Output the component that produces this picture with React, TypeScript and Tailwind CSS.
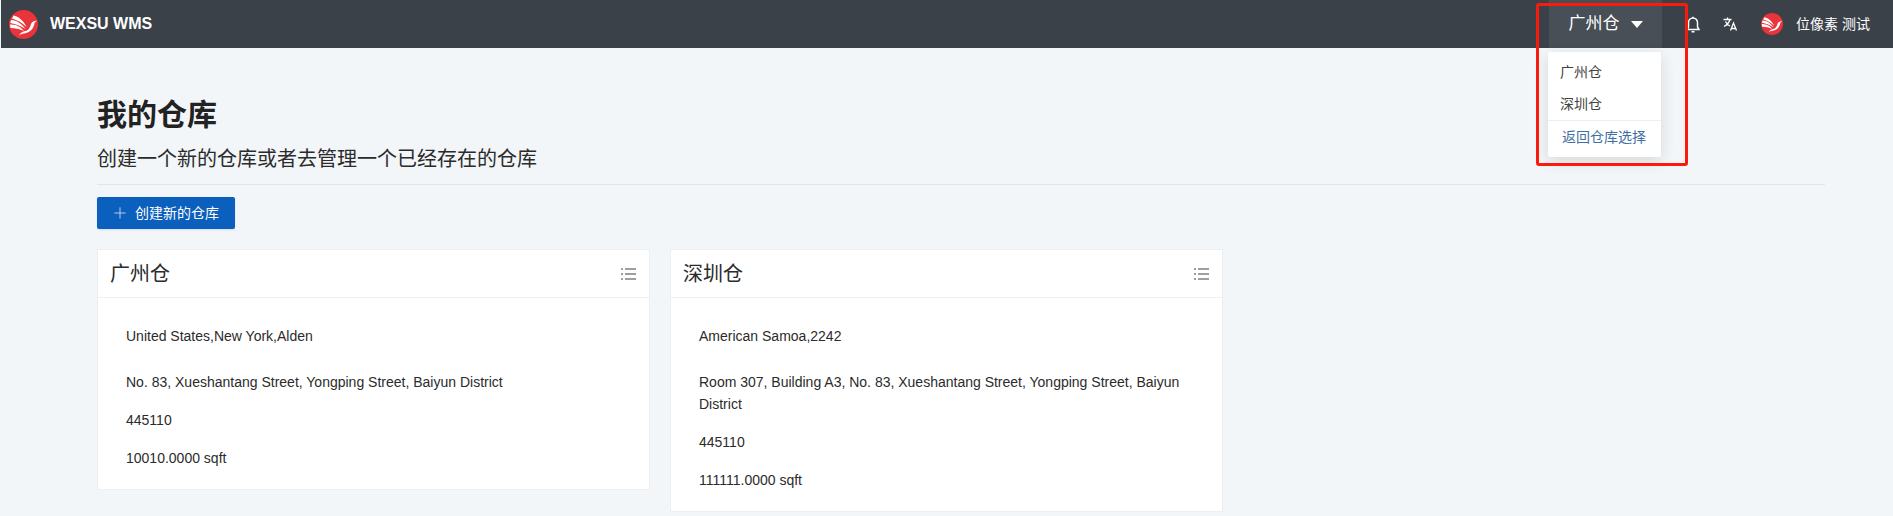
import { Plus } from 'lucide-react';

const cjk = "font-['Liberation_Sans','Noto_Sans_CJK_SC',sans-serif]";

const BirdLogo = ({ size }: { size: number }) => (
  <svg width={size} height={size} viewBox="0 0 29 29">
    <circle cx="14.5" cy="14.5" r="14.5" fill="#e8343a" />
    <path d="M4.5 5.5 C9.5 6.5 14.5 10.5 17.5 17 C13.5 13 8.5 10 3 8.5 Z" fill="#fff" />
    <path d="M2 10 C8 10 13 14 16.5 19 C12 16 7 14 1.2 13 Z" fill="#fff" />
    <path d="M1 14.5 C7 14 12 17 15 21 C11 19 6 18 1.5 18 Z" fill="#fff" />
    <path d="M16 21 C19 21 21 18 22 14 C23 11.5 25 11 28 10.5 L25.5 13 C25 18 21 23 15 23.5 C13 23.6 11 24.5 10 25.5 C11 23 13 22 16 21 Z" fill="#fff" />
  </svg>
);

const ListIcon = () => (
  <svg width="15" height="12" viewBox="0 0 15 12" fill="none" stroke="#808080" strokeWidth="1.4">
    <path d="M0 1h2M4 1h11M0 6h2M4 6h11M0 11h2M4 11h11" />
  </svg>
);

const BellIcon = () => (
  <svg width="14" height="17" viewBox="0 0 14 17" fill="none" stroke="#fff" strokeWidth="1.5">
    <path d="M1 13.5h12l-1.5-2.5V6.5a4.5 4.5 0 0 0-9 0V11Z" />
    <path d="M5.5 15.8h3M7 2V0.8" />
  </svg>
);

const TranslateIcon = () => (
  <svg width="15" height="14" viewBox="0 0 15 14" fill="none" stroke="#fff" strokeWidth="1.3">
    <path d="M0.5 2.5h8M4.5 0.5v2M7 2.5C6 6 4 8 1 9.5M2.5 4.5C3.5 6.5 5 8 7 9" />
    <path d="M7.5 13.5l3-7.5 3 7.5M8.5 11.5h4" />
  </svg>
);

interface WarehouseCardProps {
  name: string;
  region: string;
  address: string;
  postcode: string;
  area: string;
}

const WarehouseCard = ({ name, region, address, postcode, area }: WarehouseCardProps) => (
  <div className="w-[553px] self-start bg-white border border-[#edf0f3]">
    <div className="flex items-center justify-between h-[48px] pl-[12px] pr-[13px] border-b border-[#edf0f3]">
      <span className="text-[20px] text-[#2b2b2b]">{name}</span>
      <ListIcon />
    </div>
    <div className="px-[28px] pt-[27px] pb-[4px] text-[14px] leading-[22px] text-[#2b2b2b]">
      <p className="mb-[24px]">{region}</p>
      <p className="mb-[16px]">{address}</p>
      <p className="mb-[16px]">{postcode}</p>
      <p className="mb-[16px]">{area}</p>
    </div>
  </div>
);

const App = () => {
  return (
    <div className={`relative h-[516px] overflow-hidden bg-[#f3f6f9] pl-px ${cjk}`}>
      <header className="flex items-center justify-between h-[48px] bg-[#3a4149] text-white">
        <div className="flex items-center pl-[8px]">
          <BirdLogo size={29} />
          <span className="ml-[12px] text-[16px] font-bold">WEXSU WMS</span>
        </div>
        <div className="flex items-center h-full pr-[23px]">
          <div className="flex items-center justify-center gap-[11px] w-[113px] h-full bg-[#484f57] text-[17px]">
            广州仓
            <span className="w-0 h-0 border-x-[6px] border-x-transparent border-t-[7px] border-t-white" />
          </div>
          <div className="ml-[24px]"><BellIcon /></div>
          <div className="ml-[23px]"><TranslateIcon /></div>
          <div className="ml-[23px]"><BirdLogo size={22} /></div>
          <span className="ml-[13px] text-[14px]">位像素 测试</span>
        </div>
      </header>

      <div className="absolute left-[1548px] top-[52px] w-[113px] h-[105px] bg-white rounded-[2px] shadow-[0_4px_16px_rgba(0,0,0,0.12)] text-[14px] text-[#444]">
        <div className="pl-[12px] pt-[10px] leading-[20px]">广州仓</div>
        <div className="pl-[12px] pt-[12px] leading-[20px]">深圳仓</div>
        <div className="mt-[6px] border-t border-[#edf0f3] pl-[14px] pt-[6px] leading-[20px] text-[#3f6fa3]">返回仓库选择</div>
      </div>
      <div className="absolute left-[1536px] top-[3px] w-[152px] h-[163px] border-[3px] border-[#fb1b0d] rounded-[3px]" />

      <main className="pl-[96px] pr-[68px] pt-[47px]">
        <h1 className="text-[30px] leading-[40px] font-bold text-[#222]">我的仓库</h1>
        <p className="mt-[11px] text-[20px] leading-[26px] text-[#2b2b2b]">创建一个新的仓库或者去管理一个已经存在的仓库</p>
        <div className="mt-[12px] border-t border-[#e2e6ea]" />
        <button className="flex items-center mt-[12px] w-[138px] h-[32px] pl-[14px] bg-[#0b60bd] rounded-[2px] shadow-[0_1px_2px_rgba(11,96,189,0.15)] text-[14px] text-white">
          <Plus size={18} strokeWidth={1.3} className="text-[#b8d0ea]" />
          <span className="ml-[6px]">创建新的仓库</span>
        </button>
        <div className="flex items-start gap-[20px] mt-[20px]">
          <WarehouseCard
            name="广州仓"
            region="United States,New York,Alden"
            address="No. 83, Xueshantang Street, Yongping Street, Baiyun District"
            postcode="445110"
            area="10010.0000 sqft"
          />
          <WarehouseCard
            name="深圳仓"
            region="American Samoa,2242"
            address="Room 307, Building A3, No. 83, Xueshantang Street, Yongping Street, Baiyun District"
            postcode="445110"
            area="111111.0000 sqft"
          />
        </div>
      </main>
    </div>
  );
};

export default App;
